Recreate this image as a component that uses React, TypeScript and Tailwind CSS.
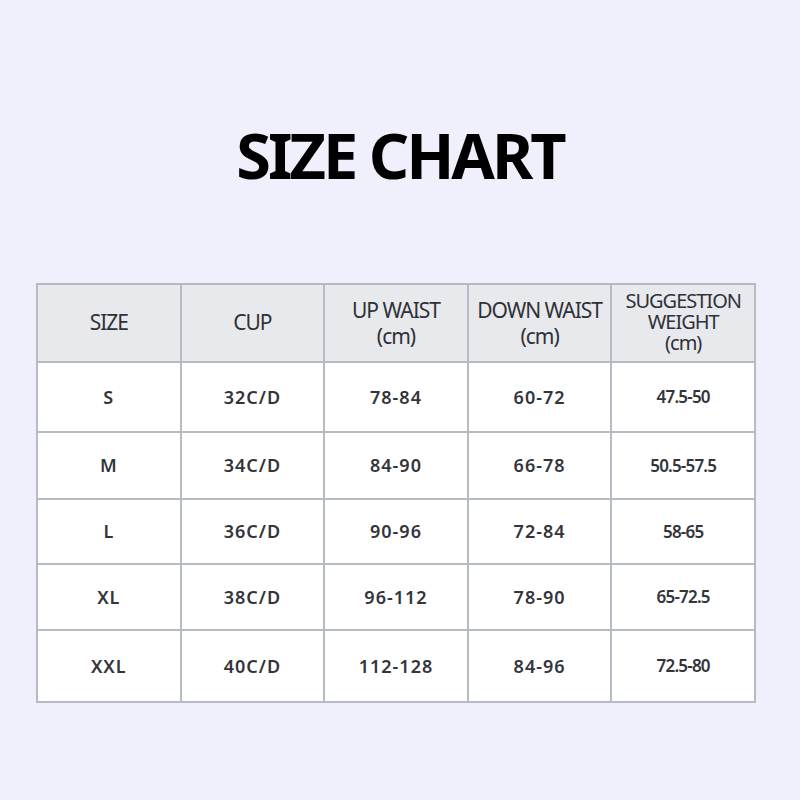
import React from 'react';

const rows = [
    {size: "S", cup: "32C/D", up: "78-84", down: "60-72", weight: "47.5-50", h: "h-[70px]"},
    {size: "M", cup: "34C/D", up: "84-90", down: "66-78", weight: "50.5-57.5", h: "h-[67px]"},
    {size: "L", cup: "36C/D", up: "90-96", down: "72-84", weight: "58-65", h: "h-[65px]"},
    {size: "XL", cup: "38C/D", up: "96-112", down: "78-90", weight: "65-72.5", h: "h-[66px]"},
    {size: "XXL", cup: "40C/D", up: "112-128", down: "84-96", weight: "72.5-80", h: "h-[72px]"},
];

const cell = "border-r-2 border-[#b6bac2] flex items-center justify-center text-center";

const App: React.FC = () => {
    return (
        <div className="w-[800px] h-[800px] bg-[#eff0fb] flex flex-col font-['Noto_Sans',sans-serif]">
            <h1 className="mt-[115px] h-[80px] text-center text-[63px] leading-[80px] font-bold tracking-[-3px] text-black">SIZE CHART</h1>
            <div className="mt-[88px] ml-[36px] w-[720px] border-l-2 border-t-2 border-[#b6bac2]">
                <div className="grid grid-cols-5 h-[78px] bg-[#e8e9ec] border-b-2 border-[#b6bac2] text-[#2f3138] text-[21px] tracking-[-1px]">
                    <div className={cell}>SIZE</div>
                    <div className={cell}>CUP</div>
                    <div className={cell + " flex-col leading-[26px]"}><span>UP WAIST</span><span>(cm)</span></div>
                    <div className={cell + " flex-col leading-[26px]"}><span>DOWN WAIST</span><span>(cm)</span></div>
                    <div className={cell + " flex-col text-[20px] leading-[21px] pb-[4px]"}><span>SUGGESTION</span><span>WEIGHT</span><span>(cm)</span></div>
                </div>
                {rows.map((r) => (
                    <div key={r.size} className={"grid grid-cols-5 bg-white border-b-2 border-[#b6bac2] text-[#33353b] text-[18px] font-semibold " + r.h}>
                        <div className={cell + " tracking-[1px]"}>{r.size}</div>
                        <div className={cell + " tracking-[1px]"}>{r.cup}</div>
                        <div className={cell + " tracking-[1px]"}>{r.up}</div>
                        <div className={cell + " tracking-[1px]"}>{r.down}</div>
                        <div className={cell + " text-[17px] tracking-[-0.8px]"}>{r.weight}</div>
                    </div>
                ))}
            </div>
        </div>
    );
};

export default App
